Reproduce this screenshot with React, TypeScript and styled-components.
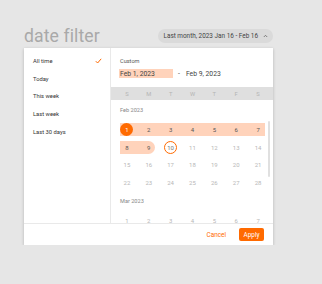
import React from 'react';
import styled, { createGlobalStyle, css } from 'styled-components';

const GlobalStyle = createGlobalStyle`
  html, body {
    margin: 0;
    padding: 0;
    background: #e6e6e6;
    font-family: Roboto, "Liberation Sans", Arial, sans-serif;
  }
`;

const ORANGE = '#ff6a00';
const PEACH = '#ffd3bb';

const Page = styled.div`
  width: 249px;
  margin-left: 24px;
  padding-top: 24px;
`;

const Header = styled.div`
  display: flex;
  align-items: center;
  justify-content: space-between;
  height: 24px;
`;

const Title = styled.h1`
  margin: 0;
  font-size: 17.6px;
  font-weight: 400;
  color: #a9a9a9;
  line-height: 24px;
  letter-spacing: 0.1px;
`;

const Pill = styled.button`
  display: flex;
  align-items: center;
  gap: 5px;
  height: 14px;
  padding: 0 5px 0 5px;
  border: none;
  border-radius: 7px;
  background: #dadada;
  font-family: inherit;
  font-size: 6.4px;
  color: #444;
  margin-top: -1px;
`;

const Panel = styled.div`
  display: grid;
  grid-template-columns: 87px 1fr;
  grid-template-rows: 175px 22px;
  background: #fff;
  box-shadow: 0 1px 3px rgba(0, 0, 0, 0.22);
`;

const Sidebar = styled.ul`
  list-style: none;
  margin: 0;
  padding: 4px 0 0;
  border-right: 1px solid #e9e9e9;
`;

const Preset = styled.li`
  display: flex;
  align-items: center;
  justify-content: space-between;
  height: 17.7px;
  padding: 0 8px 0 9px;
  font-size: 5.8px;
  color: #333;
`;

const Main = styled.div`
  display: flex;
  flex-direction: column;
  min-width: 0;
  position: relative;
`;

const Custom = styled.div`
  padding: 10px 9px 0 9px;
  font-size: 5.6px;
  color: #555;
  line-height: 7px;
`;

const Inputs = styled.div`
  display: flex;
  align-items: center;
  gap: 5px;
  padding: 4px 0 0 8px;
  height: 9px;
`;

const DateInput = styled.span<{ active?: boolean }>`
  display: inline-flex;
  align-items: center;
  width: 53px;
  height: 9px;
  padding-left: 1px;
  font-size: 6.8px;
  color: #444;
  background: ${({ active }) => (active ? PEACH : 'transparent')};
`;

const Dash = styled.span`
  font-size: 6.8px;
  color: #555;
`;

const WeekHeader = styled.div`
  display: grid;
  grid-template-columns: repeat(7, 1fr);
  margin-top: 9px;
  height: 13px;
  padding: 0 4px 0 5px;
  background: #dfdfdf;
  font-size: 5.8px;
  color: #b4b4b4;
  align-items: center;
  text-align: center;
`;

const Scroll = styled.div`
  flex: 1;
  overflow: hidden;
  padding: 0 4px 0 5px;
`;

const MonthLabel = styled.div`
  height: 21px;
  line-height: 21px;
  padding-left: 4px;
  font-size: 5.6px;
  color: #888;
`;

const Week = styled.div`
  display: grid;
  grid-template-columns: repeat(7, 1fr);
  height: 17.5px;
  align-items: center;
`;

type DayProps = {
  inRange?: boolean;
  first?: boolean;
  last?: boolean;
  rangeEnd?: boolean;
};

const Day = styled.div<DayProps>`
  position: relative;
  display: flex;
  align-items: center;
  justify-content: center;
  height: 13px;
  font-size: 6px;
  color: ${({ inRange }) => (inRange ? '#555' : '#b8b8b8')};

  ${({ inRange, first, last, rangeEnd }) =>
    inRange &&
    css`
      &::before {
        content: '';
        position: absolute;
        top: 0;
        bottom: 0;
        left: ${first ? '4px' : '0'};
        right: ${rangeEnd ? '5px' : last ? '4px' : '0'};
        background: ${PEACH};
        border-radius: ${rangeEnd ? '0 6.5px 6.5px 0' : '0'};
      }
    `}
`;

const DayMark = styled.span<{ variant?: 'start' | 'today' }>`
  position: relative;
  display: flex;
  align-items: center;
  justify-content: center;
  width: 13px;
  height: 13px;
  box-sizing: border-box;
  border-radius: 50%;
  ${({ variant }) =>
    variant === 'start' &&
    css`
      background: ${ORANGE};
      color: #fff;
    `}
  ${({ variant }) =>
    variant === 'today' &&
    css`
      border: 1px solid ${ORANGE};
      color: #777;
    `}
`;

const ScrollThumb = styled.div`
  position: absolute;
  right: 3px;
  top: 73px;
  width: 2px;
  height: 56px;
  border-radius: 1px;
  background: #e0e0e0;
`;

const Footer = styled.div`
  grid-column: 1 / 3;
  display: flex;
  align-items: center;
  justify-content: flex-end;
  gap: 13px;
  padding-right: 9px;
  border-top: 1px solid #e9e9e9;
`;

const CancelButton = styled.button`
  border: none;
  background: none;
  padding: 0;
  font-family: inherit;
  font-size: 6.4px;
  color: ${ORANGE};
`;

const ApplyButton = styled.button`
  border: none;
  border-radius: 2px;
  background: ${ORANGE};
  color: #fff;
  width: 25px;
  height: 13px;
  padding: 0;
  font-family: inherit;
  font-size: 6.4px;
`;

const Check = () => (
  <svg width="7" height="6" viewBox="0 0 7 6" fill="none">
    <path d="M0.8 3.2 L2.6 5 L6.2 0.8" stroke={ORANGE} strokeWidth="1" />
  </svg>
);

const ChevronUp = () => (
  <svg width="5" height="4" viewBox="0 0 5 4" fill="none">
    <path d="M0.8 3 L2.5 1.3 L4.2 3" stroke="#666" strokeWidth="0.8" />
  </svg>
);

const presets = ['All time', 'Today', 'This week', 'Last week', 'Last 30 days'];
const weekdays = ['S', 'M', 'T', 'W', 'T', 'F', 'S'];

const febWeeks = [
  [1, 2, 3, 4, 5, 6, 7],
  [8, 9, 10, 11, 12, 13, 14],
  [15, 16, 17, 18, 19, 20, 21],
  [22, 23, 24, 25, 26, 27, 28],
];

const rangeStart = 1;
const rangeEnd = 9;
const today = 10;

const App: React.FC = () => (
  <>
    <GlobalStyle />
    <Page>
      <Header>
        <Title>date filter</Title>
        <Pill>
          Last month, 2023 Jan 16 - Feb 16
          <ChevronUp />
        </Pill>
      </Header>
      <Panel>
        <Sidebar>
          {presets.map((p, i) => (
            <Preset key={p}>
              {p}
              {i === 0 && <Check />}
            </Preset>
          ))}
        </Sidebar>
        <Main>
          <Custom>Custom</Custom>
          <Inputs>
            <DateInput active>Feb 1, 2023</DateInput>
            <Dash>-</Dash>
            <DateInput>Feb 9, 2023</DateInput>
          </Inputs>
          <WeekHeader>
            {weekdays.map((d, i) => (
              <span key={i}>{d}</span>
            ))}
          </WeekHeader>
          <Scroll>
            <MonthLabel>Feb 2023</MonthLabel>
            {febWeeks.map((week, w) => (
              <Week key={w}>
                {week.map((d, i) => {
                  const inRange = d >= rangeStart && d <= rangeEnd;
                  return (
                    <Day
                      key={d}
                      inRange={inRange}
                      first={i === 0}
                      last={i === 6}
                      rangeEnd={d === rangeEnd}
                    >
                      {d === rangeStart ? (
                        <DayMark variant="start">{d}</DayMark>
                      ) : d === today ? (
                        <DayMark variant="today">{d}</DayMark>
                      ) : (
                        <DayMark>{d}</DayMark>
                      )}
                    </Day>
                  );
                })}
              </Week>
            ))}
            <MonthLabel>Mar 2023</MonthLabel>
            <Week>
              {[1, 2, 3, 4, 5, 6, 7].map((d) => (
                <Day key={d}>
                  <DayMark>{d}</DayMark>
                </Day>
              ))}
            </Week>
          </Scroll>
          <ScrollThumb />
        </Main>
        <Footer>
          <CancelButton>Cancel</CancelButton>
          <ApplyButton>Apply</ApplyButton>
        </Footer>
      </Panel>
    </Page>
  </>
);

export default App;
